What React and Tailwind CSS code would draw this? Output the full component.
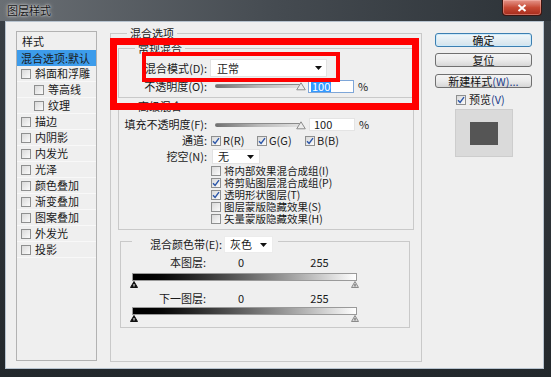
import React from "react";

const FONT = "font-['Noto_Sans_CJK_SC','Noto_Sans',sans-serif]";

function Check({ checked }) {
  return (
    <span className="relative inline-flex items-center justify-center w-[10px] h-[10px] shrink-0 border border-[#8e8f8f] bg-gradient-to-br from-[#d9d9d9] to-[#fbfbfb]">
      {checked && (
        <svg width="8" height="8" viewBox="0 0 8 8">
          <path d="M1 4.2 L3.1 6.5 L7 1.2" stroke="#2a55a8" strokeWidth="1.4" fill="none" />
        </svg>
      )}
    </span>
  );
}

function Arrow() {
  return (
    <svg width="7" height="4" viewBox="0 0 7 4">
      <polygon points="0,0 7,0 3.5,4" fill="#111" />
    </svg>
  );
}

function Slider() {
  return (
    <div className="relative ml-[8px] w-[92px] h-[10px] flex items-center">
      <div className="w-[86px] h-[4px] rounded-[2px] bg-gradient-to-r from-[#707070] via-[#b8b8b8] to-[#e2e2e2] border-t border-[#8a8a8a]" />
      <svg className="absolute right-[1px] top-[1px]" width="10" height="9" viewBox="0 0 10 9">
        <path d="M5 0.8 L9.3 7.8 L0.7 7.8 Z" fill="#ececec" stroke="#8c8c8c" strokeWidth="1" />
      </svg>
    </div>
  );
}

function Tri({ dark }) {
  return (
    <svg width="8" height="7" viewBox="0 0 8 7">
      <path d="M4 0.5 L7.5 6.5 L0.5 6.5 Z" fill={dark ? "#111" : "#d8d8d8"} stroke={dark ? "#111" : "#8a8a8a"} strokeWidth="1" />
      <rect x="3.5" y="3" width="1" height="2.5" fill={dark ? "#fff" : "#555"} />
    </svg>
  );
}

function Btn({ children, primary }) {
  return (
    <div
      className={
        "h-[14px] rounded-[3px] border flex items-center justify-center text-[11px] leading-none text-[#111] " +
        (primary
          ? "border-[#3c7fb1] bg-gradient-to-b from-[#f2f8fb] to-[#d3e3ec] shadow-[inset_0_0_0_1px_#cdeafa]"
          : "border-[#707070] bg-gradient-to-b from-[#f4f4f4] via-[#ebebeb] to-[#d6d6d6]")
      }
    >
      {children}
    </div>
  );
}

const listItems = [
  { t: "斜面和浮雕", sub: false },
  { t: "等高线", sub: true },
  { t: "纹理", sub: true },
  { t: "描边" },
  { t: "内阴影" },
  { t: "内发光" },
  { t: "光泽" },
  { t: "颜色叠加" },
  { t: "渐变叠加" },
  { t: "图案叠加" },
  { t: "外发光" },
  { t: "投影" },
];

const advChecks = [
  { t: "将内部效果混合成组(I)", c: false },
  { t: "将剪贴图层混合成组(P)", c: true },
  { t: "透明形状图层(T)", c: true },
  { t: "图层蒙版隐藏效果(S)", c: false },
  { t: "矢量蒙版隐藏效果(H)", c: false },
];

export default function App() {
  return (
    <div className={"relative w-[551px] h-[377px] overflow-hidden bg-gradient-to-b from-[#3a4046] to-[#23282c] text-[11px] leading-[13px] text-[#1a1a1a] " + FONT}>
      {/* title bar */}
      <div className="h-[21px] flex items-start justify-between bg-gradient-to-r from-[#6a6f74] via-[#454b51] to-[#2c3237]">
        <div className="ml-[7px] mt-[4px] text-[11px] leading-[13px] text-[#151515] [text-shadow:0_0_4px_#d8d8d8,0_0_2px_#f0f0f0]">
          图层样式
        </div>
        <div className="mr-[9px] w-[40px] h-[16px] rounded-b-[4px] border border-t-0 border-[#3d1510] bg-gradient-to-b from-[#e4948a] via-[#c74a35] to-[#a52a1b] flex items-center justify-center shadow-[inset_0_0_0_1px_rgba(255,200,190,0.4)]">
          <svg width="10" height="8" viewBox="0 0 10 8">
            <path d="M1.5 1 L8.5 7 M8.5 1 L1.5 7" stroke="#fff" strokeWidth="2" />
          </svg>
        </div>
      </div>

      {/* client */}
      <div className="ml-[5px] w-[539px] h-[348px] border border-[#b7c3cf] bg-[#efefef] flex items-start pl-[10px]">
        {/* style list */}
        <div className="mt-[9px] w-[81px] h-[330px] border border-[#b2b2b2] flex flex-col">
          <div className="h-[18px] pl-[5px] flex items-center">样式</div>
          <div className="h-[16px] pl-[4px] flex items-center bg-[#3d9ceb]">混合选项:默认</div>
          {listItems.map((it) => (
            <div
              key={it.t}
              className={"h-[16px] flex items-center gap-[4px] border-b border-[#f8f8f8] " + (it.sub ? "pl-[17px]" : "pl-[4px]")}
            >
              <Check />
              <span>{it.t}</span>
            </div>
          ))}
        </div>

        {/* center */}
        <fieldset className="ml-[13px] mt-[5px] w-[312px] h-[335px] border border-[#c9c9c9] px-[7px] pt-[2px]">
          <legend className="ml-[9px] px-[3px]">混合选项</legend>

          {/* 常规混合 */}
          <fieldset className="w-[296px] border border-[#c9c9c9] p-0">
            <legend className="ml-[16px] px-[3px]">常规混合</legend>
            <div className="flex items-center h-[18px] mt-[4px]">
              <div className="w-[88px] text-right">混合模式(D):</div>
              <div className="ml-[3px] w-[117px] h-[18px] bg-white border border-[#e2e2e2] flex items-center justify-between pl-[6px] pr-[4px]">
                <span>正常</span>
                <Arrow />
              </div>
            </div>
            <div className="flex items-center h-[14px] mt-[2px] mb-[4px]">
              <div className="w-[88px] text-right">不透明度(O):</div>
              <Slider />
              <div className="ml-[1px] w-[46px] h-[13px] bg-white border border-[#7ea6d8] flex items-center pl-[2px]">
                <span className="bg-[#3399ff] text-white px-[1px] leading-[11px]">100</span>
              </div>
              <span className="ml-[4px]">%</span>
            </div>
          </fieldset>

          {/* 高级混合 */}
          <fieldset className="mt-[2px] w-[296px] border border-[#c9c9c9] p-0 pb-[4px]">
            <legend className="ml-[16px] px-[3px]">高级混合</legend>
            <div className="flex items-center h-[13px] mt-[5px]">
              <div className="w-[88px] text-right">填充不透明度(F):</div>
              <Slider />
              <div className="ml-[2px] w-[46px] h-[13px] bg-white border border-[#e4e4e4] flex items-center pl-[4px]">100</div>
              <span className="ml-[4px]">%</span>
            </div>
            <div className="flex items-center h-[13px] mt-[3px]">
              <div className="w-[88px] text-right">通道:</div>
              <div className="ml-[4px] w-[46px] flex items-center gap-[2px]">
                <Check checked />
                <span>R(R)</span>
              </div>
              <div className="w-[48px] flex items-center gap-[2px]">
                <Check checked />
                <span>G(G)</span>
              </div>
              <div className="flex items-center gap-[2px]">
                <Check checked />
                <span>B(B)</span>
              </div>
            </div>
            <div className="flex items-center h-[15px] mt-[2px]">
              <div className="w-[88px] text-right">挖空(N):</div>
              <div className="ml-[5px] w-[48px] h-[15px] bg-white border border-[#e2e2e2] flex items-center justify-between pl-[5px] pr-[5px]">
                <span>无</span>
                <Arrow />
              </div>
            </div>
            <div className="mt-[1px] ml-[92px] flex flex-col">
              {advChecks.map((c) => (
                <div key={c.t} className="h-[12px] flex items-center gap-[3px] text-[10.5px] leading-[12px]">
                  <Check checked={c.c} />
                  <span className="leading-[12px]">{c.t}</span>
                </div>
              ))}
            </div>
          </fieldset>

          {/* 混合颜色带 */}
          <fieldset className="mt-[6px] ml-[2px] w-[290px] border border-[#c9c9c9] px-[11px] pb-[5px]">
            <legend className="pl-[18px] pr-[5px]">
              <div className="h-[10px] flex items-start">
                <div className="h-[17px] flex items-center">混合颜色带(E):</div>
                <div className="ml-[2px] w-[49px] h-[17px] bg-white border border-[#ececec] flex items-center justify-between pl-[5px] pr-[5px]">
                  <span>灰色</span>
                  <Arrow />
                </div>
              </div>
            </legend>
            <div className="flex items-center h-[13px] mt-[10px]">
              <div className="w-[74px] text-right">本图层:</div>
              <div className="w-[70px] text-center">0</div>
              <div className="w-[87px] text-center">255</div>
            </div>
            <div className="mt-[4px] w-[225px] h-[8px] border border-[#9a9a9a] bg-gradient-to-r from-black to-white" />
            <div className="ml-[-2px] w-[229px] h-[7px] flex justify-between">
              <Tri dark />
              <Tri />
            </div>
            <div className="flex items-center h-[13px] mt-[4px]">
              <div className="w-[74px] text-right">下一图层:</div>
              <div className="w-[70px] text-center">0</div>
              <div className="w-[87px] text-center">255</div>
            </div>
            <div className="mt-[2px] w-[225px] h-[8px] border border-[#9a9a9a] bg-gradient-to-r from-black to-white" />
            <div className="ml-[-2px] w-[229px] h-[7px] flex justify-between">
              <Tri dark />
              <Tri />
            </div>
          </fieldset>
        </fieldset>

        {/* buttons */}
        <div className="ml-[13px] mt-[11px] w-[97px] flex flex-col">
          <Btn primary>确定</Btn>
          <div className="mt-[6px]">
            <Btn>复位</Btn>
          </div>
          <div className="mt-[7px]">
            <Btn>
              新建样式<span className="text-[#24408a]">(W)...</span>
            </Btn>
          </div>
          <div className="mt-[6px] ml-[21px] h-[11px] flex items-center gap-[3px]">
            <Check checked />
            <span>
              预览<span className="text-[#24408a]">(V)</span>
            </span>
          </div>
          <div className="mt-[4px] ml-[20px] w-[58px] h-[48px] border border-[#cdcdcd] bg-[#dadada] flex items-center justify-center">
            <div className="w-[28px] h-[23px] bg-[#555555]" />
          </div>
        </div>
      </div>

      {/* red annotation boxes */}
      <div className="absolute left-[110px] top-[38px] w-[309px] h-[72px] border-[7px] border-[#ff0000]" />
      <div className="absolute left-[142px] top-[52px] w-[198px] h-[30px] border-[4px] border-[#ff0000]" />
    </div>
  );
}
